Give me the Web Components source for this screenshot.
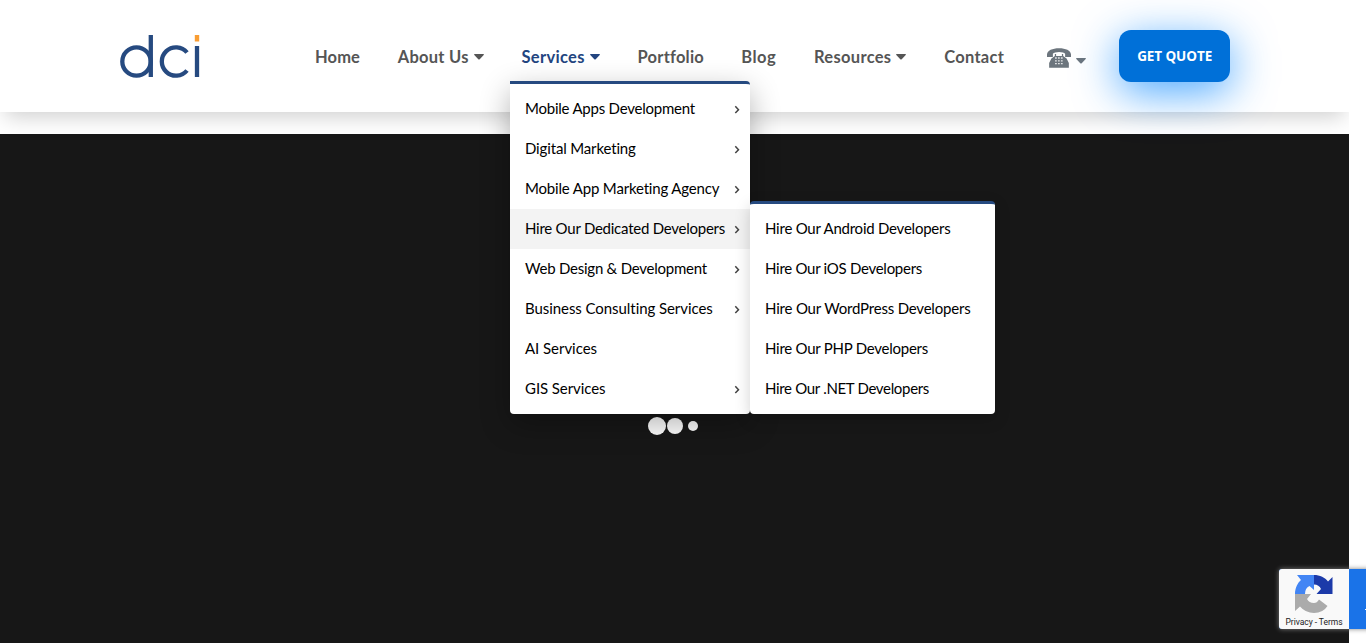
<!DOCTYPE html>
<html lang="en"><head><meta charset="utf-8"><title>DCI</title>
<style>html,body{margin:0;height:100%;overflow:hidden;background:#fff}body{font-family:Lato,"Noto Sans",sans-serif}</style></head>
<body><dci-page></dci-page>
<script>
class Base extends HTMLElement{
  constructor(){super();this.attachShadow({mode:'open'})}
  connectedCallback(){this.shadowRoot.innerHTML=this.view();this.ready&&this.ready()}
}
/* A label tracked to an exact width */
customElements.define('fit-text',class extends Base{
  view(){return `<style>:host{display:block;width:${this.getAttribute('w')}px;white-space:nowrap;flex:none}span{display:inline-block}</style><span><slot></slot></span>`}
  ready(){const s=this.shadowRoot.querySelector('span'),n=this.textContent.length,w=+this.getAttribute('w');
    const d=w-s.getBoundingClientRect().width;s.style.letterSpacing=(d/n)+'px'}
});
customElements.define('caret-down',class extends Base{
  view(){return `<style>:host{display:block;width:10px;height:6px;flex:none}svg{display:block}</style><svg width="10" height="6" viewBox="0 0 10 6"><path d="M.7 0H9.3Q10.3.2 9.7 1.1L5.7 5.2Q5 5.8 4.3 5.2L.3 1.1Q-.3.2.7 0Z" fill="currentColor"/></svg>`}
});
customElements.define('dci-logo',class extends Base{
  view(){return `<style>:host{display:block;width:80px;height:44px;flex:none}svg{display:block}</style>
  <svg width="80" height="44" viewBox="0 0 80 44" fill="none" stroke="#264a80" stroke-width="4.3"><circle cx="16.500" cy="26.500" r="14.200"/><path d="M30.800 0V42M67 17.500A14.200 14.200 0 1 0 67 35.500M77 11V42"/><path d="M77 0V6.500" stroke="#f99d33" stroke-width="4.400"/></svg>`}
});
customElements.define('nav-item',class extends Base{
  view(){const c=this.hasAttribute('caret');return `<style>:host{display:flex;align-items:center;gap:5px;color:#555;font-size:16.500px;font-weight:700;line-height:24px}:host([active]){color:#234580}caret-down{margin-top:-1px}</style><fit-text w="${this.getAttribute('w')}">${this.getAttribute('label')}</fit-text>${c?'<caret-down></caret-down>':''}`}
});
customElements.define('phone-menu',class extends Base{
  view(){return `<style>:host{display:flex;align-items:flex-start;gap:5px;color:#6c757d}svg{display:block}caret-down{margin-top:10px}</style>
  <svg width="24" height="20" viewBox="0 0 24.500 20"><path fill="currentColor" fill-rule="evenodd" d="M0 9V6.300C.3 2.200 5.500 0 12.300 0S24.200 2.200 24.500 6.300V9H18.500V5.600Q17 4 12.300 4T6 5.600V9ZM8 6H9.300V8H15.200V6H16.500V8L20 10.500L22.300 15V20H2.200V15L4.500 10.500L8 8Z"/><path stroke="#fff" stroke-opacity=".8" stroke-width="1.300" stroke-dasharray="1.800 1.200" d="M8.200 10H16.200M8.200 13H16.200M8.200 15.700H16.200"/></svg><caret-down></caret-down>`}
});
customElements.define('quote-button',class extends Base{
  view(){return `<style>:host{display:flex;width:111px;height:52px;border-radius:12px;background:#0070d8;color:#fff;align-items:center;justify-content:center;font:700 13.500px/20px "Open Sans",sans-serif;box-shadow:0 10px 44px rgba(0,132,255,.72)}</style><fit-text w="75">GET QUOTE</fit-text>`}
});
customElements.define('menu-row',class extends Base{
  view(){return `<style>:host{display:flex;height:40px;box-sizing:border-box;padding:0 10px 0 15px;align-items:center;justify-content:space-between;color:#000;font-size:15px;line-height:22px}:host([hot]){background:#f3f3f3}fit-text{padding-bottom:2px}svg{display:block;margin-top:1px}</style><fit-text w="${this.getAttribute('w')}"><slot></slot></fit-text>${this.hasAttribute('more')?'<svg width="6" height="9" viewBox="0 0 6 9"><path d="M1.300 1.300L4.500 4.700L1.300 8.100" fill="none" stroke="#444" stroke-width="1.500"/></svg>':''}`}
  ready(){const f=this.shadowRoot.querySelector('fit-text');f.innerHTML=this.innerHTML;f.ready()}
});
customElements.define('drop-menu',class extends Base{
  view(){return `<style>:host{display:block;box-sizing:border-box;background:#fff;border-top:3px solid #264a80;padding:5px 0;border-radius:0 4px 4px 4px;box-shadow:0 10px 30px rgba(0,0,0,.3)}:host([sub]){border-radius:4px;box-shadow:0 5px 16px rgba(0,0,0,.18)}</style><slot></slot>`}
});
customElements.define('site-header',class extends Base{
  view(){return `<style>
  :host{display:flex;position:relative;height:112px;box-sizing:border-box;background:#fff;box-shadow:0 10px 20px -5px rgba(0,0,0,.19);padding-left:120px;align-items:flex-start}
  dci-logo{margin-top:35px}nav{display:flex;gap:37.700px;margin:45px 0 0 115px}phone-menu{margin:48px 0 0 43px}quote-button{margin:30px 0 0 33px}</style>
  <dci-logo></dci-logo><nav><nav-item label="Home" w="45"></nav-item><nav-item label="About Us" w="71" caret></nav-item><nav-item label="Services" w="63.500" active caret></nav-item><nav-item label="Portfolio" w="66" ></nav-item><nav-item label="Blog" w="35"></nav-item><nav-item label="Resources" w="77.500" caret></nav-item><nav-item label="Contact" w="60"></nav-item></nav><phone-menu></phone-menu><quote-button></quote-button>`}
});
customElements.define('loading-dots',class extends Base{
  view(){return `<style>:host{display:flex;align-items:center;height:18px}i{display:block;border-radius:50%;background:#fff;width:18px;height:18px}i+i{width:16px;height:16px;margin-left:1px}i+i+i{width:10px;height:10px;margin-left:5px}</style><i></i><i></i><i></i>`}
});
customElements.define('captcha-badge',class extends Base{
  view(){return `<style>:host{display:flex;width:256px;height:60px;background:#1a73e8;border-radius:3px;box-shadow:0 0 5px gray;overflow:hidden}div{width:70px;height:60px;background:#f9f9f9;display:flex;flex-direction:column;align-items:center;color:#222;font:8.500px/12px Roboto,sans-serif}svg{display:block;margin:6px 0 2px}b{display:block;width:4px;height:1px;background:#fff;margin:40px 0 0 16px}</style>
  <div><svg width="38" height="39" viewBox="0 0 38 39"><path fill="#1c3aa9" d="M19 0C25 0 30 2.500 33 6.500L37.500 2V19H21.500L26 14Q24 9.500 19 9.500Z"/><path fill="#4285f4" d="M19 0V15L14.500 11Q10 13 10 19H0C0 13 2.500 8 6 5L2 0Z"/><path fill="#ababab" d="M0 19H16L12 24Q14 28 19 28Q22 28 24 24.500L32.500 31Q28 38 19 38Q10.500 38 5 31.500L0 36Z"/></svg><fit-text w="57">Privacy - Terms</fit-text></div><b></b>`}
});
customElements.define('dci-page',class extends Base{
  view(){return `<style>
  :host{display:block;position:relative;height:643px;overflow:hidden;background:#fff}
  .site{width:1349px;height:643px;overflow:hidden;position:relative}
  main{height:509px;margin-top:22px;background:#171717;padding:283px 0 0 648px;box-sizing:border-box}
  site-header{z-index:1}.menu,.sub{position:absolute;z-index:2}.menu{left:510px;top:81px;width:240px}.sub{left:750px;top:201px;width:245px;z-index:3}captcha-badge{position:absolute;left:1279px;top:569px;z-index:4}</style>
  <div class="site"><site-header></site-header><main><loading-dots></loading-dots></main>
  <drop-menu class="menu"><menu-row w="170" more>Mobile Apps Development</menu-row><menu-row w="111" more>Digital Marketing</menu-row><menu-row w="194.500" more>Mobile App Marketing Agency</menu-row><menu-row w="200" more hot>Hire Our Dedicated Developers</menu-row><menu-row w="182" more>Web Design &amp; Development</menu-row><menu-row w="188" more>Business Consulting Services</menu-row><menu-row w="72">AI Services</menu-row><menu-row w="80.500" more>GIS Services</menu-row></drop-menu>
  <drop-menu class="sub" sub><menu-row w="185.500">Hire Our Android Developers</menu-row><menu-row w="157">Hire Our iOS Developers</menu-row><menu-row w="205.500">Hire Our WordPress Developers</menu-row><menu-row w="163">Hire Our PHP Developers</menu-row><menu-row w="164">Hire Our .NET Developers</menu-row></drop-menu></div>
  <captcha-badge></captcha-badge>`}
});
</script></body></html>
